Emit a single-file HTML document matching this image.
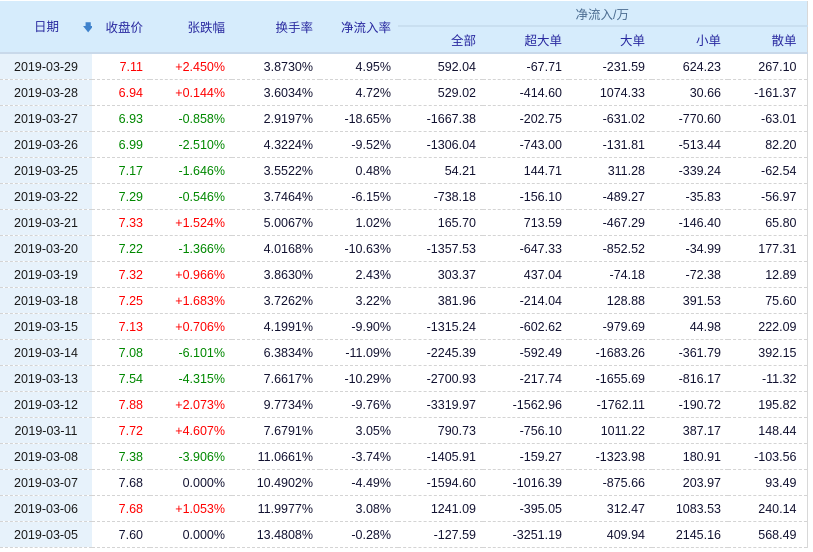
<!DOCTYPE html>
<html><head><meta charset="utf-8"><style>
body{margin:0;background:#fff;width:813px;height:552px;overflow:hidden;font-family:"Liberation Sans","Noto Sans CJK SC",sans-serif;font-size:12.5px;}
table{position:absolute;left:0;top:1px;border-collapse:collapse;table-layout:fixed;width:807px;border-right:1px solid #d8d8d8;}
td,th{padding:0 7px 0 0;text-align:right;white-space:nowrap;overflow:hidden;}
th{background:#d6ecfc;color:#2a2aa0;font-weight:normal;height:26px;}
tr.h2 th{border-bottom:2px solid #c9d9ea;height:25px;}
th.g{color:#4d6e92;text-align:center;border-bottom:2px solid #c9dff0;height:24px;padding:0}
td{height:25px;border-bottom:1px dashed #d4d4d4;color:#111130;}
td.d{background:#e7f2fb;text-align:center;padding:0;color:#1a1a1a;}
.r{color:#f00}.gr{color:#080}
.last{padding-right:10px}
</style></head><body>
<table>
<colgroup><col style="width:92px"><col style="width:58px"><col style="width:82px"><col style="width:88px"><col style="width:78px"><col style="width:85px"><col style="width:86px"><col style="width:83px"><col style="width:76px"><col style="width:79px"></colgroup>
<tr><th rowspan="2" style="text-align:left;padding:0 0 0 34px;border-bottom:2px solid #c9d9ea">日期 <span style="color:#3f82cc;margin-left:20px;font-size:11px">&#129095;</span></th><th rowspan="2" style="border-bottom:2px solid #c9d9ea">收盘价</th><th rowspan="2" style="border-bottom:2px solid #c9d9ea">张跌幅</th><th rowspan="2" style="border-bottom:2px solid #c9d9ea">换手率</th><th rowspan="2" style="border-bottom:2px solid #c9d9ea">净流入率</th><th colspan="5" class="g">净流入/万</th></tr>
<tr class="h2"><th>全部</th><th>超大单</th><th>大单</th><th>小单</th><th class="last">散单</th></tr>
<tr><td class="d">2019-03-29</td><td class="r">7.11</td><td class="r">+2.450%</td><td>3.8730%</td><td>4.95%</td><td>592.04</td><td>-67.71</td><td>-231.59</td><td>624.23</td><td class="last">267.10</td></tr>
<tr><td class="d">2019-03-28</td><td class="r">6.94</td><td class="r">+0.144%</td><td>3.6034%</td><td>4.72%</td><td>529.02</td><td>-414.60</td><td>1074.33</td><td>30.66</td><td class="last">-161.37</td></tr>
<tr><td class="d">2019-03-27</td><td class="gr">6.93</td><td class="gr">-0.858%</td><td>2.9197%</td><td>-18.65%</td><td>-1667.38</td><td>-202.75</td><td>-631.02</td><td>-770.60</td><td class="last">-63.01</td></tr>
<tr><td class="d">2019-03-26</td><td class="gr">6.99</td><td class="gr">-2.510%</td><td>4.3224%</td><td>-9.52%</td><td>-1306.04</td><td>-743.00</td><td>-131.81</td><td>-513.44</td><td class="last">82.20</td></tr>
<tr><td class="d">2019-03-25</td><td class="gr">7.17</td><td class="gr">-1.646%</td><td>3.5522%</td><td>0.48%</td><td>54.21</td><td>144.71</td><td>311.28</td><td>-339.24</td><td class="last">-62.54</td></tr>
<tr><td class="d">2019-03-22</td><td class="gr">7.29</td><td class="gr">-0.546%</td><td>3.7464%</td><td>-6.15%</td><td>-738.18</td><td>-156.10</td><td>-489.27</td><td>-35.83</td><td class="last">-56.97</td></tr>
<tr><td class="d">2019-03-21</td><td class="r">7.33</td><td class="r">+1.524%</td><td>5.0067%</td><td>1.02%</td><td>165.70</td><td>713.59</td><td>-467.29</td><td>-146.40</td><td class="last">65.80</td></tr>
<tr><td class="d">2019-03-20</td><td class="gr">7.22</td><td class="gr">-1.366%</td><td>4.0168%</td><td>-10.63%</td><td>-1357.53</td><td>-647.33</td><td>-852.52</td><td>-34.99</td><td class="last">177.31</td></tr>
<tr><td class="d">2019-03-19</td><td class="r">7.32</td><td class="r">+0.966%</td><td>3.8630%</td><td>2.43%</td><td>303.37</td><td>437.04</td><td>-74.18</td><td>-72.38</td><td class="last">12.89</td></tr>
<tr><td class="d">2019-03-18</td><td class="r">7.25</td><td class="r">+1.683%</td><td>3.7262%</td><td>3.22%</td><td>381.96</td><td>-214.04</td><td>128.88</td><td>391.53</td><td class="last">75.60</td></tr>
<tr><td class="d">2019-03-15</td><td class="r">7.13</td><td class="r">+0.706%</td><td>4.1991%</td><td>-9.90%</td><td>-1315.24</td><td>-602.62</td><td>-979.69</td><td>44.98</td><td class="last">222.09</td></tr>
<tr><td class="d">2019-03-14</td><td class="gr">7.08</td><td class="gr">-6.101%</td><td>6.3834%</td><td>-11.09%</td><td>-2245.39</td><td>-592.49</td><td>-1683.26</td><td>-361.79</td><td class="last">392.15</td></tr>
<tr><td class="d">2019-03-13</td><td class="gr">7.54</td><td class="gr">-4.315%</td><td>7.6617%</td><td>-10.29%</td><td>-2700.93</td><td>-217.74</td><td>-1655.69</td><td>-816.17</td><td class="last">-11.32</td></tr>
<tr><td class="d">2019-03-12</td><td class="r">7.88</td><td class="r">+2.073%</td><td>9.7734%</td><td>-9.76%</td><td>-3319.97</td><td>-1562.96</td><td>-1762.11</td><td>-190.72</td><td class="last">195.82</td></tr>
<tr><td class="d">2019-03-11</td><td class="r">7.72</td><td class="r">+4.607%</td><td>7.6791%</td><td>3.05%</td><td>790.73</td><td>-756.10</td><td>1011.22</td><td>387.17</td><td class="last">148.44</td></tr>
<tr><td class="d">2019-03-08</td><td class="gr">7.38</td><td class="gr">-3.906%</td><td>11.0661%</td><td>-3.74%</td><td>-1405.91</td><td>-159.27</td><td>-1323.98</td><td>180.91</td><td class="last">-103.56</td></tr>
<tr><td class="d">2019-03-07</td><td>7.68</td><td>0.000%</td><td>10.4902%</td><td>-4.49%</td><td>-1594.60</td><td>-1016.39</td><td>-875.66</td><td>203.97</td><td class="last">93.49</td></tr>
<tr><td class="d">2019-03-06</td><td class="r">7.68</td><td class="r">+1.053%</td><td>11.9977%</td><td>3.08%</td><td>1241.09</td><td>-395.05</td><td>312.47</td><td>1083.53</td><td class="last">240.14</td></tr>
<tr><td class="d">2019-03-05</td><td>7.60</td><td>0.000%</td><td>13.4808%</td><td>-0.28%</td><td>-127.59</td><td>-3251.19</td><td>409.94</td><td>2145.16</td><td class="last">568.49</td></tr>
</table>
</body></html>
